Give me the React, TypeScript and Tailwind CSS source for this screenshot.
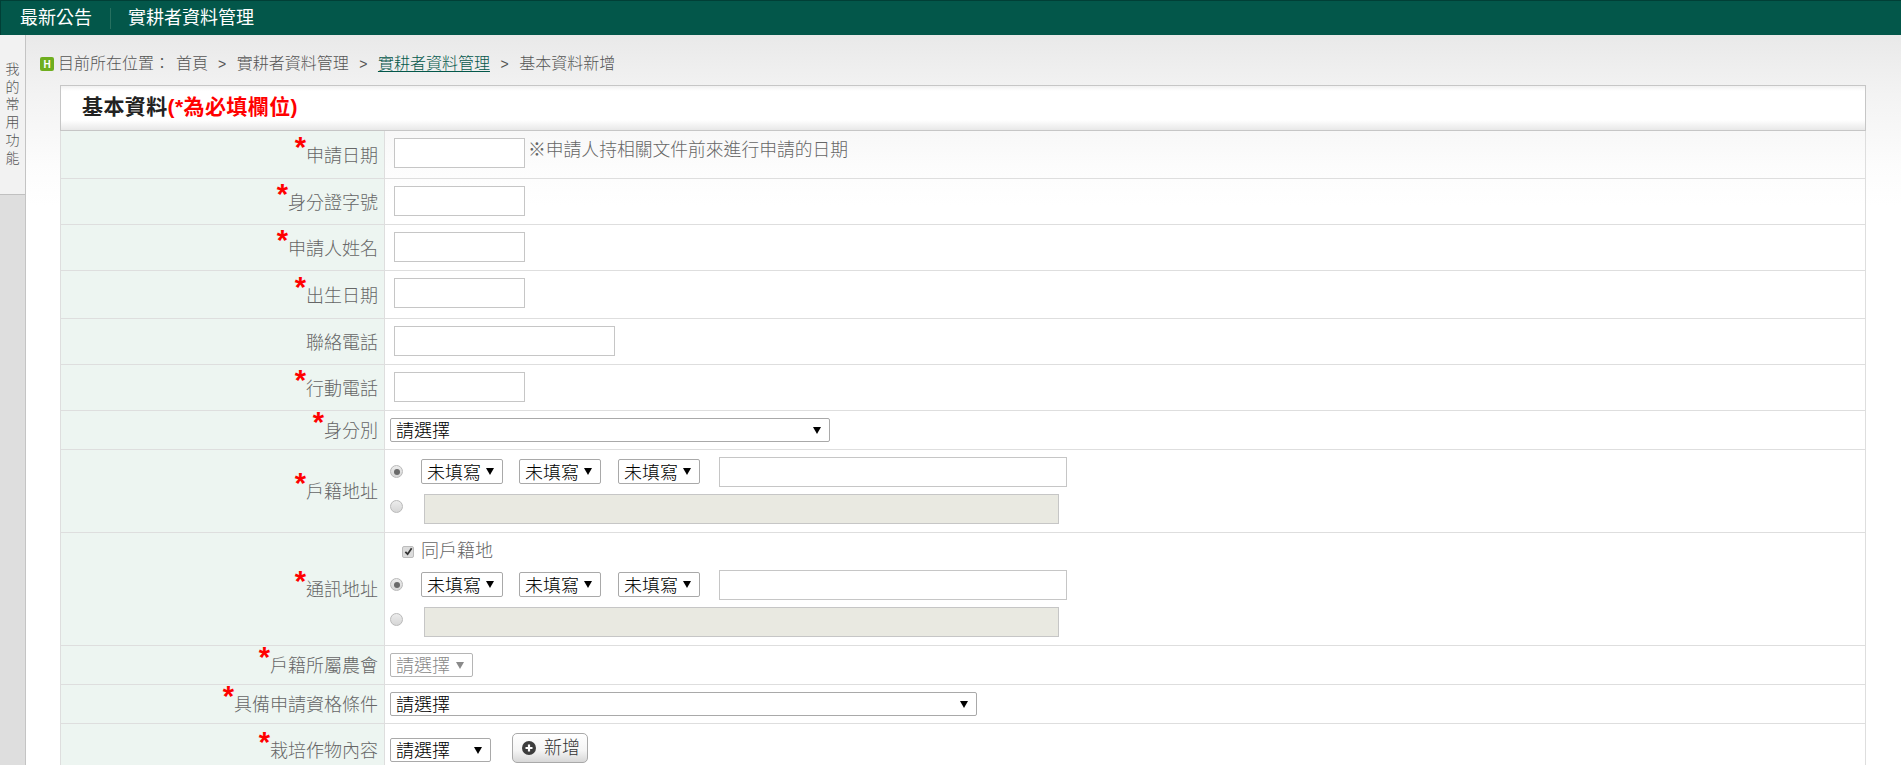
import React from 'react'

const CJK = "font-['Liberation_Sans','Noto_Sans_CJK_TC',sans-serif]"

interface SelectProps {
  width: string
  label: string
  disabled?: boolean
  tall?: boolean
}

const Select: React.FC<SelectProps> = ({ width, label, disabled, tall }) => (
  <div className={`relative shrink-0 ${width} ${tall ? 'h-[25px]' : 'h-[24px]'}`}>
    <select
      disabled={disabled}
      className={`w-full h-full appearance-none bg-white border border-[#a9a9a9] rounded-[2px] pl-[5px] pr-[14px] pt-[2px] text-[18px] leading-none font-light ${CJK} ${disabled ? 'text-[#8a8a8a] border-[#b5b5b5]' : 'text-black'}`}
    >
      <option>{label}</option>
    </select>
    <svg
      viewBox="0 0 8 7"
      className={`absolute right-[9px] top-[9px] w-[8px] h-[7px] pointer-events-none ${disabled ? 'fill-[#8a8a8a]' : 'fill-black'}`}
    >
      <path d="M0 0H8L4 7Z" />
    </svg>
  </div>
)

const TextInput: React.FC<{ width: string }> = ({ width }) => (
  <input type="text" className={`block h-[30px] shrink-0 ${width} bg-white border border-[#c6c6c6]`} />
)

const Radio: React.FC<{ checked?: boolean; top: string }> = ({ checked, top }) => (
  <span className={`flex shrink-0 items-center justify-center w-[13px] h-[13px] rounded-full border border-[#b9b9b9] bg-gradient-to-b from-[#ececec] to-[#d6d6d6] ${top}`}>
    {checked && <span className="w-[6px] h-[6px] rounded-full bg-[#6a6a6a]" />}
  </span>
)

const AddressBlock: React.FC = () => (
  <div className="flex flex-col gap-[7px]">
    <div className="flex items-start h-[30px]">
      <Radio checked top="mt-[8px]" />
      <div className="flex mt-[2px] ml-[18px] gap-[16px]">
        <Select width="w-[82px]" label="未填寫" tall />
        <Select width="w-[82px]" label="未填寫" tall />
      </div>
      <div className="mt-[2px] ml-[17px]">
        <Select width="w-[82px]" label="未填寫" tall />
      </div>
      <div className="ml-[19px]">
        <TextInput width="w-[348px]" />
      </div>
    </div>
    <div className="flex items-start h-[30px]">
      <Radio top="mt-[6px]" />
      <input disabled className="ml-[21px] w-[635px] h-[30px] bg-[#e9e9e1] border border-[#c6c6c6]" />
    </div>
  </div>
)

interface RowProps {
  label: string
  required?: boolean
  height: string
  pad?: string
  children: React.ReactNode
}

const Row: React.FC<RowProps> = ({ label, required = true, height, pad = 'pl-[9px]', children }) => (
  <div className={`flex ${height} border-b border-[#dedede]`}>
    <div className="flex items-center justify-end w-[317px] shrink-0 bg-[#edf5f1] border-r border-[#dedede] pr-[6px] pt-[2px] box-content">
      <span className="text-[18px] font-light text-[#666] whitespace-nowrap leading-[24px]">
        {required && (
          <span className="font-['Liberation_Sans',sans-serif] font-bold text-[29px] leading-[0] text-[#f00] align-[5px]">*</span>
        )}
        {label}
      </span>
    </div>
    <div className={`flex-1 pt-[7px] ${pad}`}>{children}</div>
  </div>
)

const PlusCircle: React.FC = () => (
  <svg viewBox="0 0 14 14" className="w-[14px] h-[14px] shrink-0">
    <circle cx="7" cy="7" r="7" fill="#3d3d3d" />
    <path d="M7 3.5V10.5M3.5 7H10.5" stroke="#fff" strokeWidth="2.2" />
  </svg>
)

const BreadcrumbSep: React.FC = () => (
  <span className="font-['Liberation_Sans',sans-serif] text-[14px]">&gt;</span>
)

export default function App() {
  return (
    <div className={`flex flex-col h-screen overflow-hidden bg-white ${CJK}`}>
      {/* top bar */}
      <div className="flex items-center h-[35px] shrink-0 bg-[#03574a] border-t border-l border-[#013f36] text-white text-[18px]">
        <span className="pl-[19px]">最新公告</span>
        <span className="w-px h-[21px] bg-[#26705f] ml-[18px]"></span>
        <span className="ml-[17px]">實耕者資料管理</span>
      </div>

      <div className="flex flex-1 min-h-0">
        {/* favourites tab */}
        <div className="flex flex-col w-[26px] shrink-0 border-r border-[#c4c4c4] bg-[#dedede]">
          <div className="flex flex-col items-center h-[160px] pt-[26px] bg-[#f2f2f2] border-b border-[#c0c0c0] text-[14px] leading-[17.7px] font-light text-[#555]">
            {['我', '的', '常', '用', '功', '能'].map(c => (
              <span key={c}>{c}</span>
            ))}
          </div>
        </div>

        <div className="flex-1 min-w-0 pl-[14px] bg-[linear-gradient(#e9e9e9,#f3f3f3_60px,#fcfcfc_130px,#fff_170px)]">
          {/* breadcrumb */}
          <div className="flex items-center h-[14px] mt-[22px] text-[16px] font-light text-[#555] whitespace-nowrap">
            <span className="flex items-center justify-center w-[14px] h-[14px] rounded-[2px] bg-[#6fae1f] text-white text-[10px] font-bold font-['Liberation_Sans',sans-serif]">H</span>
            <span className="ml-[4px]">目前所在位置：</span>
            <span className="ml-[6px]">首頁</span>
            <span className="flex items-center gap-[10.5px] ml-[10px]">
              <BreadcrumbSep />
              <span>實耕者資料管理</span>
              <BreadcrumbSep />
              <span className="text-[#03574a] underline underline-offset-2">實耕者資料管理</span>
              <BreadcrumbSep />
              <span>基本資料新增</span>
            </span>
          </div>

          <div className="w-[1806px] ml-[20px] mt-[14px]">
            {/* section title */}
            <div className="flex items-center h-[46px] pl-[21px] pb-[3px] border border-[#c6c6c6] bg-[linear-gradient(#f1f1f1,#fff_5px,#fff_34px,#e8e8e8)] text-[21px] font-bold tracking-[0.4px] text-[#222]">
              基本資料<span className="text-[#f00]">(*為必填欄位)</span>
            </div>

            <div className="border-x border-[#dedede]">
              <Row label="申請日期" height="h-[48px]">
                <div className="flex items-start">
                  <TextInput width="w-[131px]" />
                  <span className="ml-[3px] text-[17.8px] font-light text-[#666] leading-[24px]">※申請人持相關文件前來進行申請的日期</span>
                </div>
              </Row>
              <Row label="身分證字號" height="h-[46px]">
                <TextInput width="w-[131px]" />
              </Row>
              <Row label="申請人姓名" height="h-[46px]">
                <TextInput width="w-[131px]" />
              </Row>
              <Row label="出生日期" height="h-[48px]">
                <TextInput width="w-[131px]" />
              </Row>
              <Row label="聯絡電話" required={false} height="h-[46px]">
                <TextInput width="w-[221px]" />
              </Row>
              <Row label="行動電話" height="h-[46px]">
                <TextInput width="w-[131px]" />
              </Row>
              <Row label="身分別" height="h-[39px]" pad="pl-[5px]">
                <Select width="w-[440px]" label="請選擇" />
              </Row>
              <Row label="戶籍地址" height="h-[83px]" pad="pl-[5px]">
                <AddressBlock />
              </Row>
              <Row label="通訊地址" height="h-[113px]" pad="pl-[5px]">
                <div className="flex items-center h-[23px] mb-[7px] pl-[12px] gap-[7px] text-[18px] font-light text-[#666]">
                  <span className="flex items-center justify-center w-[12px] h-[12px] rounded-[2px] border border-[#bcbcbc] bg-[#dcdcdc]">
                    <svg viewBox="0 0 10 10" className="w-[9px] h-[9px]">
                      <path d="M1.5 5.5L4 8L8.5 1.5" fill="none" stroke="#333" strokeWidth="2" />
                    </svg>
                  </span>
                  同戶籍地
                </div>
                <AddressBlock />
              </Row>
              <Row label="戶籍所屬農會" height="h-[39px]" pad="pl-[5px]">
                <Select width="w-[83px]" label="請選擇" disabled />
              </Row>
              <Row label="具備申請資格條件" height="h-[39px]" pad="pl-[5px]">
                <Select width="w-[587px]" label="請選擇" />
              </Row>
              <Row label="栽培作物內容" height="h-[52px]" pad="pl-[5px]">
                <div className="flex items-start gap-[21px] pt-[2px]">
                  <div className="mt-[5px]">
                    <Select width="w-[101px]" label="請選擇" />
                  </div>
                  <button className="flex items-center gap-[8px] w-[76px] h-[30px] pl-[9px] rounded-[5px] border border-[#a9a9a9] bg-[linear-gradient(#fff,#f4f4f4_60%,#d8d8d8)] text-[18px] font-light text-[#333]">
                    <PlusCircle />
                    新增
                  </button>
                </div>
              </Row>
            </div>
          </div>
        </div>
      </div>
    </div>
  )
}
